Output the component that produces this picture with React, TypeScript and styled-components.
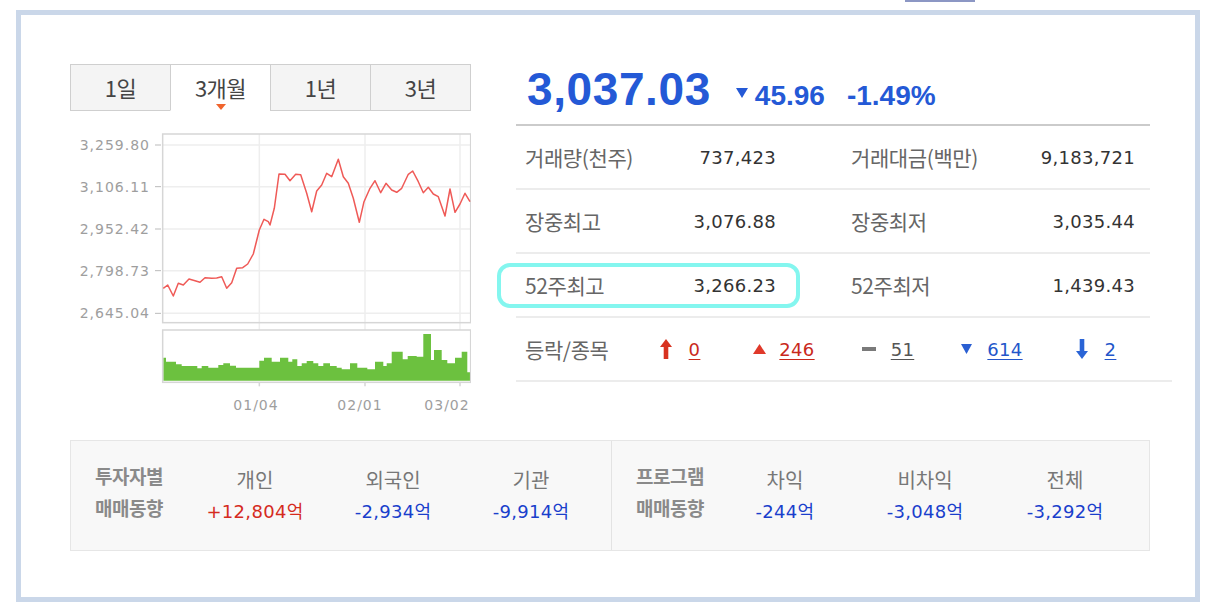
import React from "react";
import styled, { createGlobalStyle } from "styled-components";

const GlobalStyle = createGlobalStyle`
  html, body { margin: 0; padding: 0; background: #ffffff; }
  body { font-family: "Noto Sans CJK KR", "Noto Sans", sans-serif; }
  * { box-sizing: border-box; }
`;

const NUM_FONT = `"DejaVu Sans", "Noto Sans CJK KR", sans-serif`;

const Page = styled.div`
  width: 1214px;
  height: 614px;
  overflow: hidden;
  padding-left: 16px;
  display: flex;
  flex-direction: column;
`;

const TopStrip = styled.div`
  height: 10px;
  padding-left: 889px;
`;

const StripTab = styled.div`
  width: 70px;
  height: 2px;
  background: #8c97c4;
`;

const Frame = styled.div`
  width: 1184px;
  height: 592px;
  border: 5px solid #cad7e9;
  padding: 49px 0 0 49px;
  display: flex;
  flex-direction: column;
`;

const TopSection = styled.div`
  display: flex;
  align-items: flex-start;
  gap: 45px;
`;

const LeftCol = styled.div`
  width: 401px;
  display: flex;
  flex-direction: column;
`;

const Tabs = styled.div`
  display: flex;
  height: 47px;
`;

const Tab = styled.div<{ $active?: boolean }>`
  flex: 1;
  position: relative;
  display: flex;
  align-items: center;
  justify-content: center;
  margin-left: -1px;
  border: 1px solid #cfcfcf;
  border-bottom-color: ${(p) => (p.$active ? "transparent" : "#cfcfcf")};
  background: ${(p) => (p.$active ? "#ffffff" : "#f4f4f4")};
  font-size: 22px;
  color: #444;
  letter-spacing: -0.5px;
  padding-bottom: 2px;
  &:first-child {
    margin-left: 0;
  }
  ${(p) =>
    p.$active
      ? `&::after {
    content: "";
    position: absolute;
    left: 50%;
    bottom: 0;
    transform: translateX(-50%);
    border-left: 5px solid transparent;
    border-right: 5px solid transparent;
    border-top: 6px solid #f0642d;
  }`
      : ""}
`;

const ChartSvg = styled.svg`
  display: block;
  margin-top: 14px;
`;

const RightCol = styled.div`
  width: 656px;
  display: flex;
  flex-direction: column;
`;

const PriceHeader = styled.div`
  width: 634px;
  height: 62px;
  padding: 2px 0 0 11px;
  border-bottom: 2px solid #cbcbcb;
  display: flex;
  align-items: baseline;
  color: #2459d6;
  font-family: "Liberation Sans", Arial, sans-serif;
  font-weight: 700;
`;

const Price = styled.span`
  font-size: 46px;
  line-height: 46px;
  letter-spacing: 0.6px;
`;

const DownTri = styled.svg`
  align-self: center;
  margin: 0 7px 4px 25px;
`;

const Change = styled.span<{ $gap?: number }>`
  font-size: 28px;
  line-height: 28px;
  margin-left: ${(p) => p.$gap ?? 0}px;
`;

const StatRow = styled.div`
  position: relative;
  width: 634px;
  height: 64px;
  padding-left: 9px;
  border-bottom: 2px solid #ececec;
  display: grid;
  grid-template-columns: 251px 284px;
  column-gap: 75px;
  align-items: center;
`;

const Pair = styled.div`
  display: flex;
  justify-content: space-between;
  align-items: center;
`;

const Label = styled.span`
  font-size: 21px;
  color: #666;
  letter-spacing: -0.4px;
`;

const Value = styled.span`
  font-family: ${NUM_FONT};
  font-size: 18px;
  color: #333;
  letter-spacing: 0.3px;
`;

const Highlight = styled.div`
  position: absolute;
  left: -19px;
  top: 9px;
  width: 303px;
  height: 45px;
  border: 4px solid #84f6ef;
  border-radius: 13px;
  pointer-events: none;
`;

const ChangeRow = styled.div`
  width: 656px;
  height: 64px;
  padding-left: 9px;
  border-bottom: 2px solid #ececec;
  display: grid;
  grid-template-columns: 103px repeat(5, 104px);
  align-items: center;
`;

const ChangeItem = styled.div<{ $gap: number }>`
  display: flex;
  justify-content: center;
  align-items: center;
  gap: ${(p) => p.$gap}px;
`;

const ChangeNum = styled.span<{ $color: string }>`
  font-family: ${NUM_FONT};
  font-size: 18px;
  letter-spacing: 0.3px;
  color: ${(p) => p.$color};
  text-decoration: underline;
  text-underline-offset: 3px;
`;

const Panel = styled.div`
  margin-top: 25px;
  width: 1080px;
  height: 111px;
  border: 1px solid #e6e6e6;
  background: #f8f8f8;
  display: flex;
`;

const PanelHalf = styled.div<{ $labelW: number; $colW: number; $width: number }>`
  width: ${(p) => p.$width}px;
  padding-left: 24px;
  display: grid;
  grid-template-columns: ${(p) => p.$labelW}px repeat(3, ${(p) => p.$colW}px);
  align-items: center;
  & + & {
    border-left: 1px solid #e3e3e3;
  }
`;

const SectionLabel = styled.div`
  font-size: 19px;
  font-weight: 700;
  line-height: 32px;
  color: #8a8a8a;
  letter-spacing: -0.5px;
  margin-bottom: 8px;
`;

const Stat = styled.div`
  display: flex;
  flex-direction: column;
  align-items: center;
`;

const StatTitle = styled.span`
  font-size: 20px;
  line-height: 32px;
  color: #777;
`;

const StatValue = styled.span<{ $color: string }>`
  font-family: ${NUM_FONT};
  font-size: 18px;
  line-height: 32px;
  letter-spacing: 0.3px;
  color: ${(p) => p.$color};
`;

// chart data in reference zoom coordinates
const LINE: [number, number][] = [
  [310, 475], [323, 465], [340, 498], [355, 460], [370, 465], [387, 447], [405, 452], [420, 457],
  [435, 443], [455, 445], [470, 444], [485, 440], [500, 475], [515, 458], [530, 415], [548, 413],
  [563, 402], [580, 372], [598, 300], [612, 268], [625, 275], [630, 285], [643, 235], [657, 132],
  [675, 133], [690, 152], [707, 133], [722, 134], [740, 190], [755, 245], [770, 183], [785, 165],
  [800, 130], [815, 140], [835, 88], [850, 140], [865, 160], [880, 205], [898, 277], [912, 215],
  [930, 175], [945, 152], [962, 188], [978, 160], [995, 180], [1010, 187], [1025, 175], [1045, 133],
  [1058, 123], [1075, 155], [1090, 188], [1105, 172], [1120, 192], [1135, 200], [1155, 258],
  [1170, 177], [1185, 247], [1200, 222], [1215, 190], [1230, 215],
];

const BARS: [number, number][] = [
  [310, 683], [318, 695], [348, 703], [365, 708], [412, 715], [425, 708], [445, 713], [475, 705],
  [490, 700], [510, 707], [528, 713], [598, 692], [612, 683], [635, 695], [660, 683], [685, 695],
  [697, 688], [712, 708], [725, 700], [740, 693], [760, 700], [775, 708], [790, 700], [810, 708],
  [830, 713], [845, 718], [870, 700], [892, 713], [922, 718], [945, 695], [970, 708], [980, 700],
  [995, 665], [1028, 688], [1043, 678], [1070, 680], [1090, 612], [1113, 690], [1122, 660],
  [1145, 690], [1162, 700], [1185, 683], [1205, 665], [1222, 727],
];

const tx = (zx: number) => zx / 3 - 10;
const ty = (zy: number) => zy / 3 + 5;

const Y_LABELS: [string, number][] = [
  ["3,259.80", 45], ["3,106.11", 170], ["2,952.42", 297], ["2,798.73", 422], ["2,645.04", 550],
];
const X_GRID = [598, 915, 1200];
const X_LABELS: [string, number][] = [["01/04", 186], ["02/01", 290], ["03/02", 377]];

function Chart() {
  const plotL = tx(308);
  const plotR = tx(1232);
  const plotT = ty(12);
  const plotB = ty(578);
  const volT = ty(600);
  const volB = ty(757);
  const barBottom = ty(752);
  const linePath = LINE.map(([x, y], i) => `${i ? "L" : "M"}${tx(x).toFixed(1)} ${ty(y).toFixed(1)}`).join(" ");
  const bars = BARS.map(([x, top], i) => {
    const end = i + 1 < BARS.length ? BARS[i + 1][0] : 1230;
    return `M${tx(x).toFixed(1)} ${barBottom.toFixed(1)} V${ty(top).toFixed(1)} H${tx(end).toFixed(1)} V${barBottom.toFixed(1)} Z`;
  }).join(" ");
  return (
    <ChartSvg width={401} height={290} viewBox="0 0 401 290">
      {Y_LABELS.map(([, zy]) => (
        <line key={zy} x1={plotL} x2={plotR} y1={ty(zy)} y2={ty(zy)} stroke="#eeeeee" strokeWidth={1.5} />
      ))}
      {X_GRID.map((zx) => (
        <line key={zx} x1={tx(zx)} x2={tx(zx)} y1={plotT} y2={volT} stroke="#eeeeee" strokeWidth={1.5} />
      ))}
      {X_GRID.map((zx) => (
        <line key={`b${zx}`} x1={tx(zx)} x2={tx(zx)} y1={volB} y2={volB + 4} stroke="#d6d6d6" strokeWidth={1.5} />
      ))}
      <rect x={plotL} y={plotT} width={plotR - plotL} height={plotB - plotT} fill="none" stroke="#d6d6d6" strokeWidth={1.5} />
      <path d={bars} fill="#6cc13f" />
      <rect x={plotL} y={volT} width={plotR - plotL} height={volB - volT} fill="none" stroke="#d6d6d6" strokeWidth={1.5} />
      <path d={linePath} fill="none" stroke="#ef5a57" strokeWidth={1.5} strokeLinejoin="round" />
      {Y_LABELS.map(([t, zy]) => (
        <g key={t}>
          <line x1={85} x2={91} y1={ty(zy)} y2={ty(zy)} stroke="#bbbbbb" strokeWidth={1} />
          <text x={80} y={ty(zy)} dominantBaseline="central" textAnchor="end" fontFamily="DejaVu Sans, sans-serif" fontSize={14} letterSpacing={1} fill="#9e9e9e">
            {t}
          </text>
        </g>
      ))}
      {X_LABELS.map(([t, x]) => (
        <text key={t} x={x} y={280} dominantBaseline="central" textAnchor="middle" fontFamily="DejaVu Sans, sans-serif" fontSize={14} letterSpacing={1} fill="#9e9e9e">
          {t}
        </text>
      ))}
    </ChartSvg>
  );
}

const UpArrow = ({ color }: { color: string }) => (
  <svg width="12" height="20" viewBox="0 0 12 20">
    <path d="M6 0 L12 8 H8.3 V20 H3.7 V8 H0 Z" fill={color} />
  </svg>
);
const DownArrow = ({ color }: { color: string }) => (
  <svg width="12" height="20" viewBox="0 0 12 20">
    <path d="M6 20 L12 12 H8.3 V0 H3.7 V12 H0 Z" fill={color} />
  </svg>
);
const UpTri = ({ color }: { color: string }) => (
  <svg width="13" height="10" viewBox="0 0 13 10">
    <path d="M6.5 0 L13 10 H0 Z" fill={color} />
  </svg>
);
const SmallDownTri = ({ color }: { color: string }) => (
  <svg width="11" height="10" viewBox="0 0 11 10">
    <path d="M0 0 H11 L5.5 10 Z" fill={color} />
  </svg>
);
const Dash = () => (
  <svg width="14" height="4" viewBox="0 0 14 4">
    <rect width="14" height="4" fill="#7a7a7a" />
  </svg>
);

const RED = "#c9291c";
const BLUE = "#2356ca";

export default function App() {
  return (
    <>
      <GlobalStyle />
      <Page>
        <TopStrip>
          <StripTab />
        </TopStrip>
        <Frame>
          <TopSection>
            <LeftCol>
              <Tabs>
                <Tab>1일</Tab>
                <Tab $active>3개월</Tab>
                <Tab>1년</Tab>
                <Tab>3년</Tab>
              </Tabs>
              <Chart />
            </LeftCol>
            <RightCol>
              <PriceHeader>
                <Price>3,037.03</Price>
                <DownTri width="12" height="10" viewBox="0 0 12 10">
                  <path d="M0 0 H12 L6 10 Z" fill="#2459d6" />
                </DownTri>
                <Change>45.96</Change>
                <Change $gap={22}>-1.49%</Change>
              </PriceHeader>
              <StatRow>
                <Pair>
                  <Label>거래량(천주)</Label>
                  <Value>737,423</Value>
                </Pair>
                <Pair>
                  <Label>거래대금(백만)</Label>
                  <Value>9,183,721</Value>
                </Pair>
              </StatRow>
              <StatRow>
                <Pair>
                  <Label>장중최고</Label>
                  <Value>3,076.88</Value>
                </Pair>
                <Pair>
                  <Label>장중최저</Label>
                  <Value>3,035.44</Value>
                </Pair>
              </StatRow>
              <StatRow>
                <Highlight />
                <Pair>
                  <Label>52주최고</Label>
                  <Value>3,266.23</Value>
                </Pair>
                <Pair>
                  <Label>52주최저</Label>
                  <Value>1,439.43</Value>
                </Pair>
              </StatRow>
              <ChangeRow>
                <Label>등락/종목</Label>
                <ChangeItem $gap={17}>
                  <UpArrow color="#d8321f" />
                  <ChangeNum $color={RED}>0</ChangeNum>
                </ChangeItem>
                <ChangeItem $gap={13}>
                  <UpTri color="#e0392a" />
                  <ChangeNum $color={RED}>246</ChangeNum>
                </ChangeItem>
                <ChangeItem $gap={15}>
                  <Dash />
                  <ChangeNum $color="#555555">51</ChangeNum>
                </ChangeItem>
                <ChangeItem $gap={15}>
                  <SmallDownTri color="#2a5fd2" />
                  <ChangeNum $color={BLUE}>614</ChangeNum>
                </ChangeItem>
                <ChangeItem $gap={17}>
                  <DownArrow color="#2a64d6" />
                  <ChangeNum $color={BLUE}>2</ChangeNum>
                </ChangeItem>
              </ChangeRow>
            </RightCol>
          </TopSection>
          <Panel>
            <PanelHalf $width={540} $labelW={91} $colW={138}>
              <SectionLabel>
                투자자별
                <br />
                매매동향
              </SectionLabel>
              <Stat>
                <StatTitle>개인</StatTitle>
                <StatValue $color="#d52b1e">+12,804억</StatValue>
              </Stat>
              <Stat>
                <StatTitle>외국인</StatTitle>
                <StatValue $color="#1a3fcc">-2,934억</StatValue>
              </Stat>
              <Stat>
                <StatTitle>기관</StatTitle>
                <StatValue $color="#1a3fcc">-9,914억</StatValue>
              </Stat>
            </PanelHalf>
            <PanelHalf $width={538} $labelW={79} $colW={140}>
              <SectionLabel>
                프로그램
                <br />
                매매동향
              </SectionLabel>
              <Stat>
                <StatTitle>차익</StatTitle>
                <StatValue $color="#1a3fcc">-244억</StatValue>
              </Stat>
              <Stat>
                <StatTitle>비차익</StatTitle>
                <StatValue $color="#1a3fcc">-3,048억</StatValue>
              </Stat>
              <Stat>
                <StatTitle>전체</StatTitle>
                <StatValue $color="#1a3fcc">-3,292억</StatValue>
              </Stat>
            </PanelHalf>
          </Panel>
        </Frame>
      </Page>
    </>
  );
}
